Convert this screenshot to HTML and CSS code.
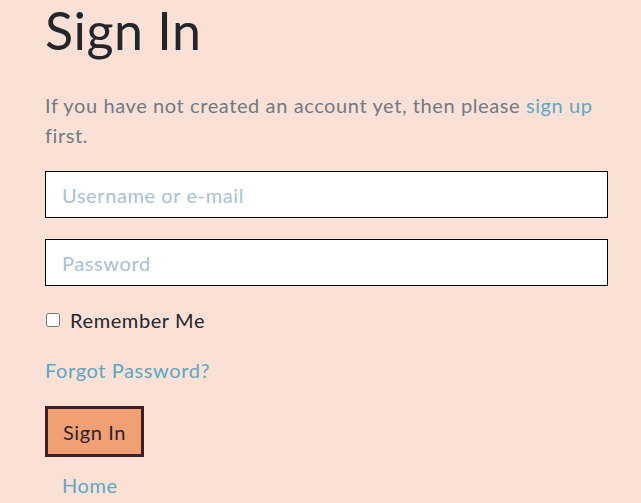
FILE: index.html
```html
<!DOCTYPE html>
<html>
<head>
<meta charset="utf-8">
<link rel="stylesheet" href="styles.css">
</head>
<body>
<main class="page">
  <h1 class="title">Sign In</h1>
  <p class="intro">If you have not created an account yet, then please <a class="link" href="#">sign up</a> first.</p>
  <form class="form">
    <input class="field" type="text" placeholder="Username or e-mail">
    <input class="field" type="password" placeholder="Password">
    <label class="remember"><input class="check" type="checkbox"> Remember Me</label>
    <a class="link forgot" href="#">Forgot Password?</a>
    <div class="actions"><button class="btn" type="button">Sign In</button></div>
    <a class="link home" href="#">Home</a>
  </form>
</main>
</body>
</html>
```
FILE: styles.css
```css
html, body {
  margin: 0;
  background: #fbe1d5;
  font-family: "Lato", "Open Sans", sans-serif;
  letter-spacing: 0.6px;
  overflow: hidden;
}
.page {
  padding: 0 33px 0 45px;
  width: 563px;
}
.title {
  margin: 0;
  font-size: 52px;
  font-weight: 400;
  line-height: 60px;
  letter-spacing: 0.5px;
  color: #23262b;
}
.intro {
  margin: 30px 0 0;
  font-size: 20px;
  line-height: 30px;
  color: #6f7a84;
}
.link {
  color: #5aa8c6;
  text-decoration: none;
}
.form {
  display: flex;
  flex-direction: column;
  align-items: flex-start;
  margin-top: 21px;
}
.field {
  box-sizing: border-box;
  width: 563px;
  height: 47px;
  margin: 0 0 21px;
  border: 1px solid #000;
  border-radius: 0;
  background: #fff;
  padding: 0 16px;
  font-family: inherit;
  font-size: 20px;
  letter-spacing: inherit;
  color: #333;
  outline: none;
}
.field::placeholder {
  color: #a9c0d8;
}
.remember {
  display: flex;
  align-items: center;
  gap: 10px;
  margin-top: 1px;
  font-size: 20px;
  line-height: 24px;
  color: #23262b;
}
.check {
  margin: 0 0 0 1px;
  width: 14px;
  height: 14px;
}
.forgot {
  margin-top: 26px;
  font-size: 20px;
  line-height: 24px;
}
.actions {
  margin-top: 24px;
}
.btn {
  box-sizing: border-box;
  width: 99px;
  height: 51px;
  background: #f0a073;
  border: 3px solid #3b1f2b;
  border-radius: 0;
  font-family: inherit;
  font-size: 20px;
  letter-spacing: inherit;
  color: #2b2327;
  padding: 0;
}
.home {
  margin: 16px 0 0 17px;
  font-size: 20px;
  line-height: 24px;
}
```
